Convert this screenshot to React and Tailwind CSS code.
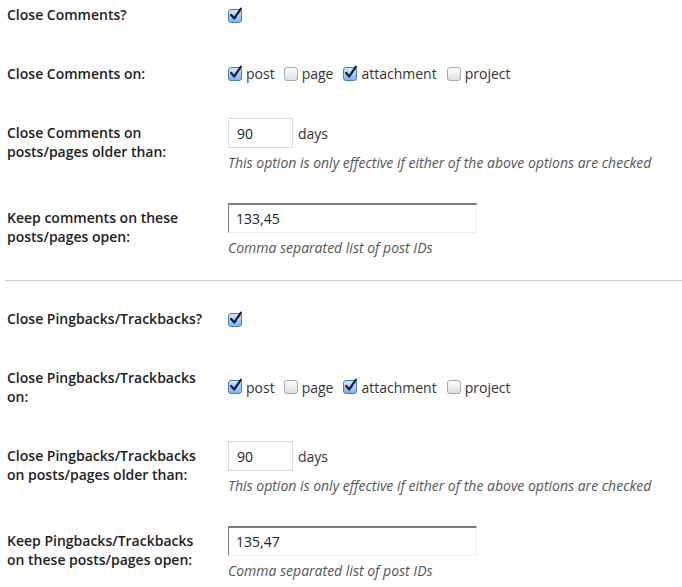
import React from "react";

const Check = ({ checked }) =>
  checked ? (
    <span className="relative inline-block w-[14px] h-[14px] rounded-[3px] border border-[#4f7bb3] bg-gradient-to-b from-[#d4e7fb] to-[#7fb4ec] shrink-0">
      <svg
        viewBox="0 0 16 16"
        className="absolute left-[0px] top-[-3px] w-[14px] h-[15px]"
      >
        <path
          d="M2.5 8.5 L6 12.5 L13.5 1.5"
          fill="none"
          stroke="#10203a"
          strokeWidth="2.6"
          strokeLinecap="round"
          strokeLinejoin="round"
        />
      </svg>
    </span>
  ) : (
    <span className="inline-block w-[14px] h-[14px] rounded-[3px] border border-[#a9a9a9] bg-gradient-to-b from-[#ffffff] to-[#dedede] shrink-0" />
  );

const Options = () => (
  <div className="flex items-center text-[14px] text-[#333] leading-[19px]">
    <Check checked />
    <span className="ml-[4px] mr-[9px]">post</span>
    <Check />
    <span className="ml-[4px] mr-[10px]">page</span>
    <Check checked />
    <span className="ml-[4px] mr-[10px]">attachment</span>
    <Check />
    <span className="ml-[4px]">project</span>
  </div>
);

const Label = ({ children }) => (
  <div className="self-start pl-[7px] pr-[21px] py-[20px] text-[14px] font-semibold leading-[19px] text-[#222]">
    {children}
  </div>
);

const Days = () => (
  <div className="self-center py-[15px]">
    <div className="flex items-center">
      <input
        readOnly
        value="90"
        className="w-[65px] h-[30px] px-[8px] border border-[#dcdcdc] text-[14px] text-[#222] outline-none"
      />
      <span className="ml-[5px] text-[14px] text-[#333]">days</span>
    </div>
    <p className="mt-[5px] text-[14px] leading-[20px] italic text-[#555]">
      This option is only effective if either of the above options are checked
    </p>
  </div>
);

const Ids = ({ value }) => (
  <div className="self-center py-[15px]">
    <input
      readOnly
      value={value}
      className="block w-[249px] h-[30px] px-[7px] border-t-2 border-l border-t-[#7a7a7a] border-l-[#7a7a7a] border-r border-b border-r-[#ececec] border-b-[#ececec] text-[14px] text-[#222] outline-none"
    />
    <p className="mt-[5px] text-[14px] leading-[20px] italic text-[#555]">
      Comma separated list of post IDs
    </p>
  </div>
);

const Row = ({ label, children }) => (
  <>
    <Label>{label}</Label>
    {children}
  </>
);

export default function App() {
  return (
    <div
      className="w-[682px] h-[587px] overflow-hidden bg-white"
      style={{ fontFamily: '"Open Sans", "Noto Sans", sans-serif' }}
    >
      <div className="-mt-[15px]">
        <div className="grid grid-cols-[228px_1fr]">
          <Row label="Close Comments?">
            <div className="self-start pt-[20px]">
              <Check checked />
            </div>
          </Row>
          <Row label="Close Comments on:">
            <div className="self-center">
              <Options />
            </div>
          </Row>
          <Row label="Close Comments on posts/pages older than:">
            <Days />
          </Row>
          <Row label="Keep comments on these posts/pages open:">
            <Ids value="133,45" />
          </Row>
        </div>

        <div className="ml-[5px] mt-[7px] mb-[7px] border-t border-t-[#cfcfcf] border-b border-b-[#f3f3f3]" />

        <div className="grid grid-cols-[228px_1fr]">
          <Row label="Close Pingbacks/Trackbacks?">
            <div className="self-start pt-[20px]">
              <Check checked />
            </div>
          </Row>
          <Row label="Close Pingbacks/Trackbacks on:">
            <div className="self-center">
              <Options />
            </div>
          </Row>
          <Row label="Close Pingbacks/Trackbacks on posts/pages older than:">
            <Days />
          </Row>
          <Row label="Keep Pingbacks/Trackbacks on these posts/pages open:">
            <Ids value="135,47" />
          </Row>
        </div>
      </div>
    </div>
  );
}
